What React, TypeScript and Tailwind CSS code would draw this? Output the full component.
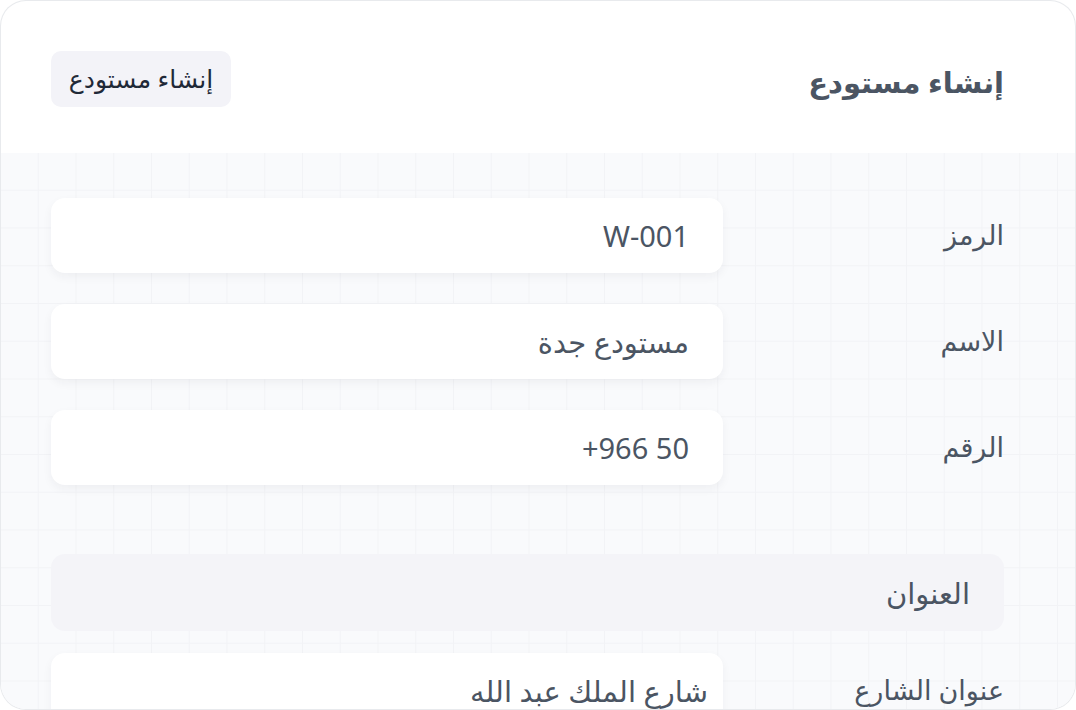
const font = 'font-["Noto_Sans","DejaVu_Sans",sans-serif]'

const inputBox = 'flex h-[75px] w-[672px] shrink-0 items-center rounded-[14px] bg-white shadow-[0_4px_10px_rgba(30,41,59,0.05)]'

function Row({ label, value, pad = 'pr-[34px]', ltr = false }: { label: string; value: string; pad?: string; ltr?: boolean }) {
  return (
    <div className="flex items-center">
      <div className="flex-1 text-[27px] text-[#4b5563]">{label}</div>
      <div className={`${inputBox} ${pad}`}>
        <span dir={ltr ? 'ltr' : undefined} className="text-[29px] text-[#4b5563]">{value}</span>
      </div>
    </div>
  )
}

export default function App() {
  return (
    <div dir="rtl" className={`${font} h-[710px] w-[1076px] overflow-hidden rounded-[26px] border border-gray-300/50 bg-white`}>
      <header className="flex h-[152px] items-start justify-between pl-[50px] pr-[71px] pt-[50px]">
        <h1 className="flex h-[62px] items-center text-[29px] font-semibold text-[#4b5563]">إنشاء مستودع</h1>
        <button className="flex h-[56px] w-[180px] items-center justify-center rounded-[10px] bg-[#f3f3f8] text-[25px] text-[#1f2937]">
          إنشاء مستودع
        </button>
      </header>

      <main className="h-full bg-[#f9fafc] bg-[linear-gradient(to_right,#f2f3f6_1px,transparent_1px),linear-gradient(to_bottom,#f2f3f6_1px,transparent_1px)] bg-[size:37.75px_37.75px] bg-[position:-1px_-1px] pl-[50px] pr-[71px] pt-[45px]">
        <div className="flex flex-col gap-[31px]">
          <Row label="الرمز" value="W-001" />
          <Row label="الاسم" value="مستودع جدة" />
          <Row label="الرقم" value="+966 50" ltr />
        </div>

        <div className="mt-[69px] flex h-[77px] items-center rounded-[14px] bg-[#f4f4f8] pr-[34px] text-[29px] text-[#4b5563]">
          العنوان
        </div>

        <div className="mt-[22px]">
          <Row label="عنوان الشارع" value="شارع الملك عبد الله" pad="pr-[15px]" />
        </div>
      </main>
    </div>
  )
}
